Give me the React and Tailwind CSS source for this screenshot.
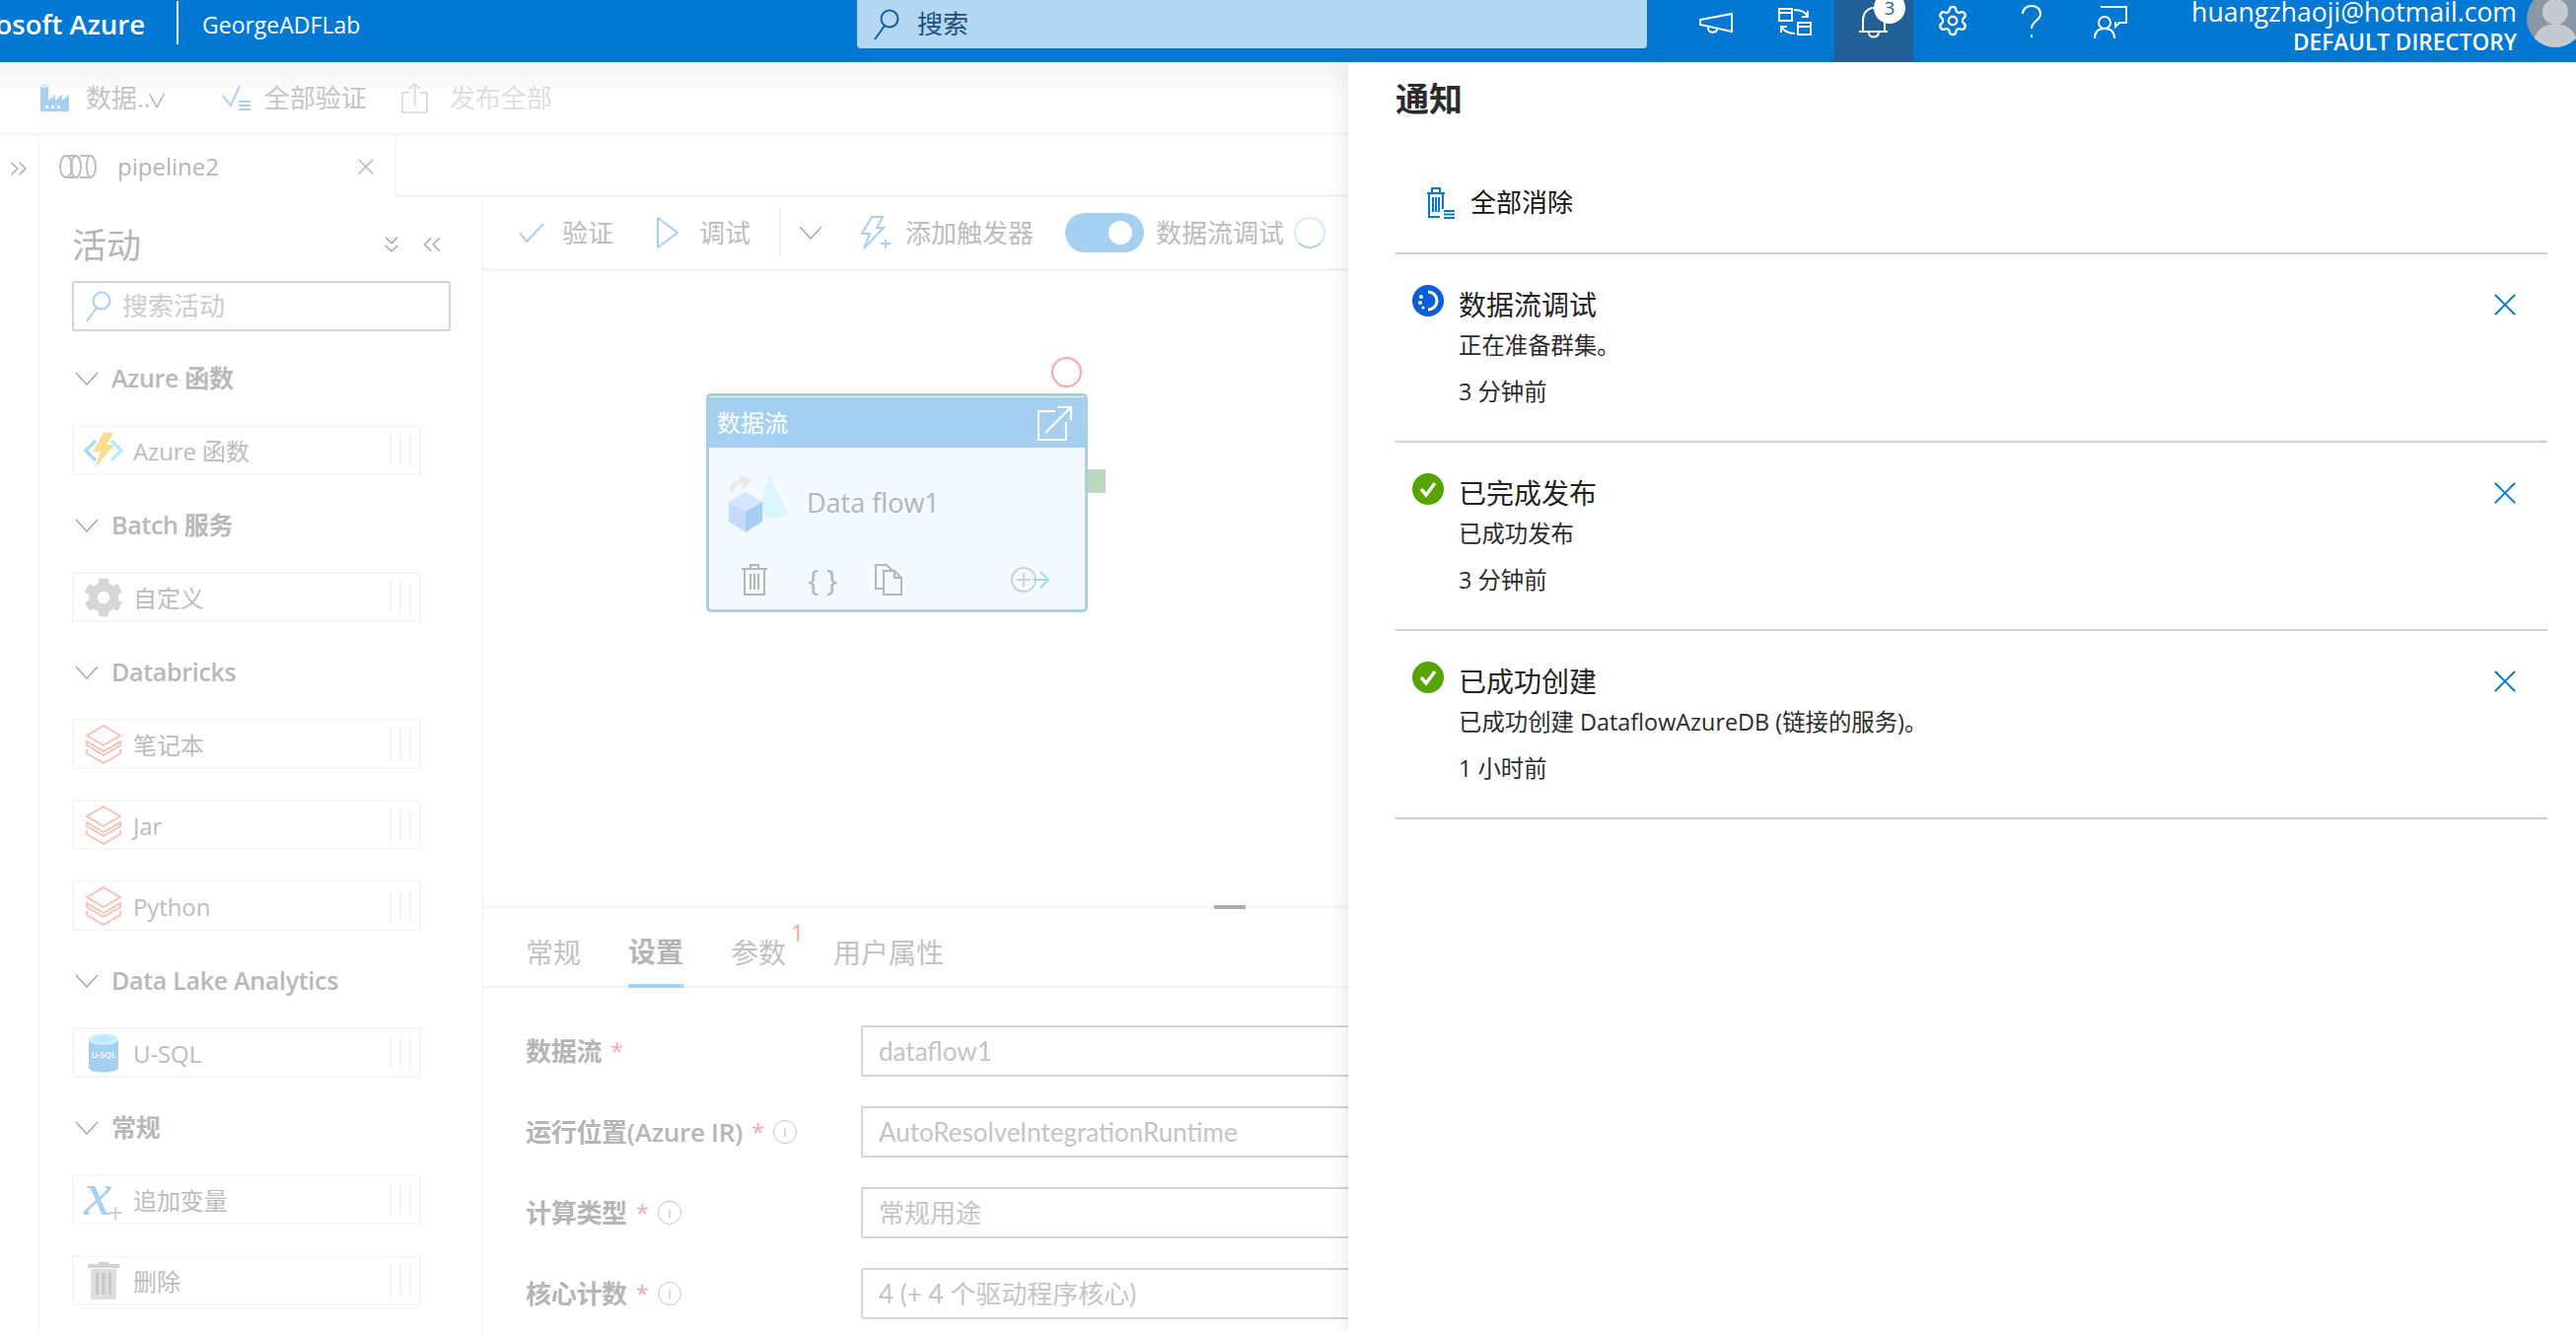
import React from "react";
import { ChevronsDown, ChevronsLeft, ChevronsRight, Settings, X } from "lucide-react";
import { FaCog } from "react-icons/fa";

const font = { fontFamily: '"Open Sans", "Noto Sans CJK SC", sans-serif' };
const narrow = { fontFamily: 'Lato, "Noto Sans CJK SC", sans-serif' };

const Chev = ({ w = 24, h = 14, className = "" }) => (
  <svg className={className} width={w} height={h} viewBox="0 0 24 14" preserveAspectRatio="none" fill="none" stroke="#a8a8a8" strokeWidth="1.500">
    <path d="M1 1l11 12L23 1" />
  </svg>
);

const Megaphone = () => (
  <svg width="34" height="24" viewBox="0 0 34 24" fill="none" stroke="#fff" strokeWidth="2">
    <path d="M1 8 33 2v18L1 13z" />
    <path d="M9 16c0 6 8 6 9 2" />
  </svg>
);

const Swap = () => (
  <svg width="34" height="28" viewBox="0 0 34 28" fill="none" stroke="#fff" strokeWidth="2">
    <path d="M1 1h13v12H1zM1 5h13M20 15h13v12H20zM20 19h13" />
    <path d="M16 2c7 0 12 2 14 7M30 3v6h-6M17 26c-7 0-11-2-14-7M3 25v-6h6" />
  </svg>
);

const Bell = () => (
  <svg width="30" height="32" viewBox="0 0 30 32" fill="none" stroke="#fff" strokeWidth="2">
    <path d="M4 24V14C4 6 9 1 15 1s11 5 11 13v10M0 25h29" />
    <path d="M10 26c0 6 9 6 10 0" />
  </svg>
);

const Question = () => (
  <svg width="20" height="34" viewBox="0 0 20 34" fill="none" stroke="#fff" strokeWidth="2">
    <path d="M1 9c0-5 4-8 9-8s9 3 9 8c0 7-9 7-9 15" />
    <path d="M10 30v3" />
  </svg>
);

const Feedback = () => (
  <svg width="34" height="34" viewBox="0 0 34 34" fill="none" stroke="#fff" strokeWidth="2">
    <path d="M7 1h26v16h-7l-4 4v-5" />
    <circle cx="11" cy="17" r="6" />
    <path d="M1 33c0-7 4-10 10-10s10 3 10 10" />
  </svg>
);

const Factory = () => (
  <svg width="31" height="30" viewBox="0 0 31 30">
    <path d="M1 3h8v15l7-6v6l7-6v6l7-6v17H1z" fill="#a6d0f2" />
    <ellipse cx="5" cy="3" rx="4" ry="2" fill="#d6f0f8" />
    <path d="M6 23h3v3H6zM12 23h3v3h-3zM18 23h3v3h-3z" fill="#fff" />
  </svg>
);

const CheckAll = () => (
  <svg width="30" height="28" viewBox="0 0 30 28" fill="none">
    <path d="M1 12 9 22 18 2" stroke="#a6d0f2" strokeWidth="2" />
    <path d="M17 18h12M17 22h12M17 26h12" stroke="#a6d0f2" strokeWidth="2" />
  </svg>
);

const Publish = () => (
  <svg width="27" height="32" viewBox="0 0 27 32" fill="none" stroke="#dedede" strokeWidth="2">
    <path d="M8 11H1v20h25V11h-7M13.500 24V2M8 7l5.500-5L19 7" />
  </svg>
);

const Pipeline = () => (
  <svg width="38" height="26" viewBox="0 0 38 26" fill="none" stroke="#bdbdbd" strokeWidth="2">
    <ellipse cx="7" cy="13" rx="6" ry="11" />
    <path d="M7 2h10M7 24h10" />
    <ellipse cx="17" cy="13" rx="5" ry="11" />
    <path d="M21 2h10c8 0 8 22 0 22H21M31 2c-4 3-4 18 0 22" />
  </svg>
);

const Search = ({ color }) => (
  <svg width="26" height="32" viewBox="0 0 26 32" fill="none" stroke={color} strokeWidth="2">
    <circle cx="16" cy="10" r="8.500" />
    <path d="M11 17 1 31" />
  </svg>
);

const Bolt = () => (
  <svg width="32" height="34" viewBox="0 0 32 34" fill="none" stroke="#a6d0f2" strokeWidth="2">
    <path d="M12 1h11l-6 11h7L4 33l6-15H2z" />
    <path d="M26 24v9M21 28h10" />
  </svg>
);

const FunctionIcon = () => (
  <svg width="40" height="36" viewBox="0 0 40 36" fill="none">
    <path d="M12 8 2 18l10 10" stroke="#a9dcf6" strokeWidth="3.500" />
    <path d="M28 8l10 10-10 10" stroke="#b7ecfa" strokeWidth="3.500" />
    <path d="M20 0h10l-7 12h8L11 36l6-17H9z" fill="#fddc91" />
  </svg>
);

const Layers = () => (
  <svg width="38" height="40" viewBox="0 0 38 40" fill="none" stroke="#fbbcb3" strokeWidth="1.800">
    <path d="M19 1 36 11 19 21 2 11z" />
    <path d="M2 17v4l17 10 17-10v-4L19 27z" />
    <path d="M2 25v4l17 10 17-10v-4" />
  </svg>
);

const Usql = () => (
  <svg width="32" height="40" viewBox="0 0 32 40">
    <path d="M1 6v29c0 6 30 6 30 0V6z" fill="#a6d0f2" />
    <ellipse cx="16" cy="6" rx="15" ry="6" fill="#d9edf8" />
    <ellipse cx="16" cy="6" rx="11" ry="3.500" fill="#b7ecfa" />
    <text x="16" y="25" textAnchor="middle" fontSize="8.500" fontWeight="600" fill="#fff" fontFamily="Open Sans">U-SQL</text>
  </svg>
);

const Variable = () => (
  <span className="relative flex h-[40px] w-[40px] items-start">
    <span className="-mt-[6px] text-[64px] leading-[40px] text-[#a6d0f2] italic" style={{ fontFamily: '"Liberation Serif", serif' }}>x</span>
    <span className="absolute right-0 bottom-[-6px] text-[28px] leading-none text-[#cfcfcf]">+</span>
  </span>
);

const TrashFilled = () => (
  <svg width="32" height="38" viewBox="0 0 32 38">
    <path d="M11 0h10v2h11v4H0V2h11z" fill="#d2d2d2" />
    <path d="M3 7h26v29c0 1-1 2-2 2H5c-1 0-2-1-2-2z" fill="#dedede" />
    <path d="M8 11h3v22H8zM14.500 11h3v22h-3zM21 11h3v22h-3z" fill="#c6c6c6" />
  </svg>
);

const Cube = () => (
  <svg width="62" height="62" viewBox="0 0 62 62">
    <path d="M42 2 60 40c-2 8-22 9-28 2z" fill="#d9f6fd" />
    <path d="M4 20c0-8 8-12 14-11M12 4l9 5-7 6" fill="none" stroke="#e8e8e8" strokeWidth="4" />
    <path d="M1 30 18 20l17 10-17 10z" fill="#d4e6fb" />
    <path d="M1 30v20l17 11V40z" fill="#c5dcf8" />
    <path d="M35 30v20L18 61V40z" fill="#a6d0f2" />
  </svg>
);

const OpenLink = () => (
  <svg width="36" height="36" viewBox="0 0 36 36" fill="none" stroke="#fff" strokeWidth="2.200">
    <path d="M18 6H1v29h28V17M8 28 34 2M20 2h14v13" />
  </svg>
);

const NodeTrash = () => (
  <svg width="26" height="32" viewBox="0 0 26 32" fill="none" stroke="#b5b5b5" strokeWidth="2">
    <path d="M0 5h26M9 5V1h8v4M3 5v26h20V5M9 10v16M13 10v16M17 10v16" />
  </svg>
);

const NodeCopy = () => (
  <svg width="28" height="32" viewBox="0 0 28 32" fill="none" stroke="#b5b5b5" strokeWidth="2">
    <path d="M8 25H1V1h11l6 6" />
    <path d="M9 7h11l7 7v17H9zM20 7v7h7" />
  </svg>
);

const NodeAdd = () => (
  <svg width="40" height="26" viewBox="0 0 40 26" fill="none" strokeWidth="2">
    <circle cx="13" cy="13" r="12" stroke="#cfcfcf" />
    <path d="M6 13h14M13 6v14" stroke="#cfcfcf" />
    <path d="M22 13h16M30 5l8 8-8 8" stroke="#a2dcec" />
  </svg>
);

const ClearAll = () => (
  <svg width="28" height="32" viewBox="0 0 28 32" fill="none" stroke="#0078d4" strokeWidth="2">
    <path d="M0 6h18M5 5V1h8v4M2 6v24h11M6 10v15M9 10v15M12 10v15M16 6v16" />
    <path d="M17 24h11M17 27.500h11M17 31h11" />
  </svg>
);

const InfoDot = () => (
  <span className="flex h-[24px] w-[24px] items-center justify-center rounded-full border border-[#c6c6c6] text-[13px] leading-none font-normal text-[#bdbdbd]">i</span>
);

const SpinStatus = () => (
  <svg width="32" height="32" viewBox="0 0 32 32">
    <circle cx="16" cy="16" r="16" fill="#0a5fd6" />
    <path d="M16 7a9 9 0 0 1 0 18" fill="none" stroke="#fff" strokeWidth="3" />
    <circle cx="9" cy="12" r="2" fill="#fff" />
    <circle cx="8" cy="18" r="2" fill="#fff" />
    <circle cx="11" cy="23" r="1.500" fill="#fff" />
  </svg>
);

const DoneStatus = () => (
  <svg width="32" height="32" viewBox="0 0 32 32">
    <circle cx="16" cy="16" r="16" fill="#57a300" />
    <path d="M9 16l5 6 9-12" fill="none" stroke="#fff" strokeWidth="3.500" />
  </svg>
);

const groups = [
  { title: "Azure 函数", items: [{ icon: <FunctionIcon />, label: "Azure 函数" }] },
  { title: "Batch 服务", items: [{ icon: <FaCog size={40} color="#d6d6d6" />, label: "自定义" }] },
  {
    title: "Databricks",
    items: [
      { icon: <Layers />, label: "笔记本" },
      { icon: <Layers />, label: "Jar" },
      { icon: <Layers />, label: "Python" },
    ],
  },
  { title: "Data Lake Analytics", items: [{ icon: <Usql />, label: "U-SQL" }] },
  {
    title: "常规",
    items: [
      { icon: <Variable />, label: "追加变量" },
      { icon: <TrashFilled />, label: "删除" },
    ],
  },
];

const fields = [
  { label: "数据流", value: "dataflow1" },
  { label: "运行位置(Azure IR)", value: "AutoResolveIntegrationRuntime", info: true },
  { label: "计算类型", value: "常规用途", info: true },
  { label: "核心计数", value: "4 (+ 4 个驱动程序核心)", info: true },
];

const notices = [
  { status: <SpinStatus />, title: "数据流调试", text: "正在准备群集。", time: "3 分钟前" },
  { status: <DoneStatus />, title: "已完成发布", text: "已成功发布", time: "3 分钟前" },
  { status: <DoneStatus />, title: "已成功创建", text: "已成功创建 DataflowAzureDB (链接的服务)。", time: "1 小时前" },
];

function Header() {
  return (
    <header className="flex h-[63px] shrink-0 overflow-hidden bg-[#0078d4] text-white">
      <div className="flex w-[869px] shrink-0 items-start">
        <div className="flex h-[50px] w-[147px] shrink-0 items-center justify-end overflow-hidden">
          <span className="text-[27.500px] font-semibold whitespace-nowrap">Microsoft Azure</span>
        </div>
        <div className="mt-[1px] ml-[32px] h-[44px] w-[2px] bg-white" />
        <span className="mt-[7px] ml-[24px] text-[23px] leading-[36px]">GeorgeADFLab</span>
      </div>
      <div className="flex h-[49px] w-[801px] shrink-0 items-center gap-[18px] rounded-b-sm bg-[#b3d7f2] pl-[17px]">
        <Search color="#0f5ea8" />
        <span className="text-[26px] text-[#1d4f7c]">搜索</span>
      </div>
      <div className="ml-[30px] flex shrink-0">
        <div className="flex h-[63px] w-[80px] items-start justify-center pt-[12px]"><Megaphone /></div>
        <div className="flex h-[63px] w-[80px] items-start justify-center pt-[8px]"><Swap /></div>
        <div className="relative flex h-[63px] w-[80px] items-start justify-center bg-[#235f99] pt-[7px]">
          <Bell />
          <span className="absolute top-[-8px] left-[40px] flex h-[32px] w-[32px] items-center justify-center rounded-full bg-white text-[19px] text-[#235f99]">3</span>
        </div>
        <div className="flex h-[63px] w-[80px] items-start justify-center pt-[4px]"><Settings size={34} strokeWidth={1.6} /></div>
        <div className="flex h-[63px] w-[80px] items-start justify-center pt-[5px]"><Question /></div>
        <div className="flex h-[63px] w-[80px] items-start justify-center pt-[6px]"><Feedback /></div>
      </div>
      <div className="flex flex-1 flex-col items-end leading-none">
        <span className="mt-[-3px] text-[26.600px] leading-[30px] whitespace-nowrap">huangzhaoji@hotmail.com</span>
        <span className="mt-[1px] text-[22.600px] leading-[30px] font-semibold whitespace-nowrap">DEFAULT DIRECTORY</span>
      </div>
      <div className="mt-[-10px] mr-[-8px] ml-[10px] h-[58px] w-[58px] shrink-0 overflow-hidden rounded-full bg-[#8a98a5]">
        <svg width="58" height="58" viewBox="0 0 58 58">
          <circle cx="29" cy="22" r="13" fill="#c3cad0" />
          <ellipse cx="29" cy="54" rx="22" ry="20" fill="#c3cad0" />
        </svg>
      </div>
    </header>
  );
}

function Toolbar() {
  return (
    <div className="flex h-[74px] shrink-0 items-center border-b-2 border-[#f6f6f6] bg-gradient-to-b from-[#f3f3f3] to-white to-50% pl-[40px] text-[26px]">
      <Factory />
      <span className="ml-[16px] text-[#c4c4c4]">数据..</span>
      <Chev w={16} h={16} className="mt-[6px] -ml-[2px]" />
      <span className="ml-[58px]"><CheckAll /></span>
      <span className="ml-[13px] text-[#c4c4c4]">全部验证</span>
      <span className="ml-[35px]"><Publish /></span>
      <span className="ml-[22px] text-[#dedede]">发布全部</span>
    </div>
  );
}

function Sidebar() {
  return (
    <aside className="h-full w-[450px] shrink-0 overflow-hidden border-r-2 border-[#f6f6f6] pl-[33px]">
      <div className="mt-[30px] flex h-[36px] items-center">
        <span className="w-[310px] text-[35px] leading-none text-[#b5b5b5]">活动</span>
        <ChevronsDown size={28} strokeWidth={1.3} color="#a8a8a8" />
        <ChevronsLeft size={30} strokeWidth={1.3} color="#a8a8a8" className="ml-[12px]" />
      </div>
      <div className="mt-[19px] flex h-[51px] w-[384px] items-center gap-[11px] rounded-[3px] border-2 border-[#d4d4d4] pl-[12px]">
        <Search color="#a6d0f2" />
        <span className="text-[26px] text-[#cdcdcd]">搜索活动</span>
      </div>
      <div className="mt-[28px] flex flex-col gap-[31px]">
        {groups.map((group) => (
          <div key={group.title} className="flex flex-col gap-[31px]">
            <div className="-mb-[4px] flex h-[40px] items-center gap-[13px] pl-[3px]">
              <Chev />
              <span className="text-[25px] font-semibold tracking-[-0.3px] text-[#b8b8b8]">{group.title}</span>
            </div>
            {group.items.map((item) => (
              <div key={item.label} className="flex h-[51px] w-[354px] items-center border-2 border-[#f6f6f6] pl-[10px]">
                <span className="flex w-[40px] justify-center">{item.icon}</span>
                <span className="ml-[10px] flex-1 pt-[2px] text-[24px] tracking-[-0.1px] text-[#bcbcbc]">{item.label}</span>
                <span className="mr-[8px] flex gap-[8px]">
                  <i className="h-[32px] w-[2px] bg-[#f3f3f3]" />
                  <i className="h-[32px] w-[2px] bg-[#f3f3f3]" />
                  <i className="h-[32px] w-[2px] bg-[#f3f3f3]" />
                </span>
              </div>
            ))}
          </div>
        ))}
      </div>
    </aside>
  );
}

function PipelineBar() {
  return (
    <div className="flex h-[75px] shrink-0 items-center border-b-[3px] border-[#f3f3f3] text-[26px] text-[#bcbcbc]">
      <svg className="ml-[36px]" width="26" height="20" viewBox="0 0 26 20" fill="none" stroke="#a6d0f2" strokeWidth="2">
        <path d="M1 10l7 9L25 1" />
      </svg>
      <span className="ml-[18px]">验证</span>
      <svg className="ml-[44px]" width="22" height="32" viewBox="0 0 22 32" fill="none" stroke="#a6d0f2" strokeWidth="2">
        <path d="M1 1l20 15L1 31z" />
      </svg>
      <span className="ml-[21px]">调试</span>
      <i className="ml-[29px] h-[48px] w-[2px] bg-[#ececec]" />
      <Chev className="ml-[18px]" />
      <span className="ml-[38px]"><Bolt /></span>
      <span className="ml-[14px] whitespace-nowrap">添加触发器</span>
      <div className="ml-[32px] flex h-[40px] w-[80px] shrink-0 items-center justify-end rounded-full bg-[#a6d0f2] pr-[12px]">
        <i className="h-[24px] w-[24px] rounded-full bg-white" />
      </div>
      <span className="ml-[12px] whitespace-nowrap">数据流调试</span>
      <i className="ml-[10px] h-[32px] w-[32px] shrink-0 rounded-full border-2 border-[#d9e9f7] border-b-[#a6d0f2]" />
    </div>
  );
}

function Canvas() {
  return (
    <div className="relative h-[643px] shrink-0">
      <div className="absolute top-[87px] left-[576px] h-[31px] w-[31px] rounded-full border-2 border-[#fda6a6]" />
      <div className="absolute top-[124px] left-[226px] flex h-[222px] w-[387px] flex-col overflow-hidden rounded-[5px] border-[3px] border-[#a8d0de] bg-[#f2f9ff]">
        <div className="mt-[1px] flex h-[51px] shrink-0 items-center justify-between bg-[#a6d0f2] pr-[12px] pl-[8px]">
          <span className="text-[24px] text-white">数据流</span>
          <OpenLink />
        </div>
        <div className="mt-[25px] flex items-center pl-[19px]">
          <Cube />
          <span className="ml-[18px] text-[27px] text-[#b5b5b5]">Data flow1</span>
        </div>
        <div className="mt-[31px] flex items-center pl-[33px]">
          <NodeTrash />
          <span className="ml-[41px] text-[30px] leading-[32px] text-[#b5b5b5]">{"{ }"}</span>
          <span className="ml-[38px]"><NodeCopy /></span>
          <span className="ml-[110px]"><NodeAdd /></span>
        </div>
      </div>
      <div className="absolute top-[201px] left-[613px] h-[24px] w-[18px] bg-[#bcd7bd]" />
    </div>
  );
}

function SettingsPanel() {
  return (
    <div className="min-h-0 flex-1">
      <div className="relative h-[4px] bg-[#f6f6f6]">
        <i className="absolute top-0 left-[741px] h-[4px] w-[32px] bg-[#aaaaaa]" />
      </div>
      <div className="flex h-[80px] items-stretch gap-[48px] border-b-2 border-[#f3f3f3] pl-[43px] text-[28px] text-[#c2c2c2]">
        <span className="flex items-center pt-[10px]">常规</span>
        <span className="-mb-[2px] flex items-center border-b-4 border-[#a6d0f2] pt-[10px] font-semibold text-[#b5b5b5]">设置</span>
        <span className="relative flex items-center pt-[10px]">
          参数
          <span className="absolute top-[13px] -right-[18px] text-[23px] leading-none text-[#f6a6ac]">1</span>
        </span>
        <span className="flex items-center pt-[10px]">用户属性</span>
      </div>
      <div className="mt-[38px] flex flex-col gap-[30px]">
        {fields.map((field) => (
          <div key={field.label} className="flex h-[52px]">
            <div className="flex w-[383px] shrink-0 items-center gap-[9px] pl-[43px] text-[26px] tracking-[-0.3px] text-[#b5b5b5]">
              <span className="font-semibold whitespace-nowrap">{field.label}</span>
              <span className="text-[24px] text-[#f3a9ad]">*</span>
              {field.info && <InfoDot />}
            </div>
            <div className="flex flex-1 items-center rounded-l-[3px] border-y-2 border-l-2 border-[#d4d4d4] pl-[16px] text-[26px] text-[#c4c4c4]" style={narrow}>
              {field.value}
            </div>
          </div>
        ))}
      </div>
    </div>
  );
}

function Notifications() {
  return (
    <aside className="z-10 h-full flex-1 bg-white pr-[29px] pl-[48px] shadow-[-4px_0_16px_rgba(0,0,0,0.08)]">
      <h1 className="mt-[17px] h-[40px] text-[34px] leading-[40px] font-semibold text-[#2b2b2b]">通知</h1>
      <div className="flex h-[138px] items-center gap-[16px] border-b-2 border-[#d0d0d0] pt-[35px] pl-[32px] text-[26px] text-[#111]">
        <ClearAll />
        全部消除
      </div>
      {notices.map((notice) => (
        <div key={notice.title} className="flex h-[191px] border-b-2 border-[#d0d0d0] pt-[31px] pl-[17px]">
          <div className="w-[32px] shrink-0">{notice.status}</div>
          <div className="ml-[15px] flex-1 text-[#2b2b2b]">
            <div className="h-[40px] text-[28px] leading-[40px] text-[#222]">{notice.title}</div>
            <div className="mt-[2px] h-[38px] text-[23.400px] leading-[38px]">{notice.text}</div>
            <div className="mt-[9px] text-[23.400px] leading-[38px]">{notice.time}</div>
          </div>
          <X size={38} strokeWidth={1.2} color="#0078d4" className="mt-[1px] mr-[24px]" />
        </div>
      ))}
    </aside>
  );
}

export default function App() {
  return (
    <div className="flex h-[1353px] w-[2612px] flex-col overflow-hidden bg-white" style={font}>
      <Header />
      <div className="flex min-h-0 flex-1">
        <div className="flex h-full w-[1367px] shrink-0 flex-col overflow-hidden">
          <Toolbar />
          <div className="flex min-h-0 flex-1">
            <div className="flex w-[40px] shrink-0 justify-center border-r-2 border-[#f6f6f6] pt-[20px]">
              <ChevronsRight size={28} strokeWidth={1.3} color="#a8a8a8" />
            </div>
            <div className="flex min-w-0 flex-1 flex-col">
              <div className="flex h-[63px] shrink-0">
                <div className="flex w-[362px] items-center border-r-2 border-[#f6f6f6] pl-[20px]">
                  <Pipeline />
                  <span className="ml-[21px] flex-1 text-[24px] text-[#b5b5b5]">pipeline2</span>
                  <X size={28} strokeWidth={1.1} color="#b0b0b0" className="mr-[15px]" />
                </div>
                <div className="flex-1 border-b-[3px] border-[#f3f3f3]" />
              </div>
              <div className="flex min-h-0 flex-1">
                <Sidebar />
                <div className="flex min-w-0 flex-1 flex-col">
                  <PipelineBar />
                  <Canvas />
                  <SettingsPanel />
                </div>
              </div>
            </div>
          </div>
        </div>
        <Notifications />
      </div>
    </div>
  );
}
